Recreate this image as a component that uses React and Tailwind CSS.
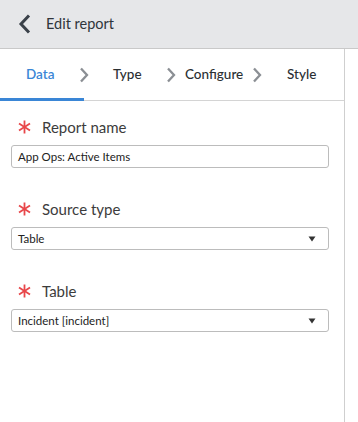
function Asterisk() {
  return (
    <svg width="13" height="14" viewBox="0 0 13 14" className="shrink-0">
      <g stroke="#e8474a" strokeWidth="1.8" strokeLinecap="butt">
        <line x1="6.5" y1="0.5" x2="6.5" y2="13.5" />
        <line x1="1" y1="3.5" x2="12" y2="10.5" />
        <line x1="1" y1="10.5" x2="12" y2="3.5" />
      </g>
    </svg>
  );
}

function Caret() {
  return (
    <svg width="8" height="6" viewBox="0 0 8 6" className="shrink-0">
      <path d="M0.5 0.5 L7.5 0.5 L4 5.5 Z" fill="#333" />
    </svg>
  );
}

function StepChevron() {
  return (
    <svg width="10" height="16" viewBox="0 0 10 16" className="shrink-0">
      <path d="M2 1.5 L8 8 L2 14.5" fill="none" stroke="#8b8f94" strokeWidth="2.3" />
    </svg>
  );
}

function Field({ label, value, select }) {
  return (
    <div className="flex flex-col">
      <div className="flex items-center h-5 pl-[18px]">
        <Asterisk />
        <span className="ml-[11px] text-[15px] text-[#3c3c3c] leading-5">{label}</span>
      </div>
      <div className="mt-2 ml-[11px] w-[318px] h-[23px] border border-[#bcbcbc] rounded-[3px] flex items-center pl-[6px] pr-[12px]">
        <span className="flex-1 text-[11.5px] text-[#222]">{value}</span>
        {select && <Caret />}
      </div>
    </div>
  );
}

export default function App() {
  return (
    <div className="w-[358px] h-[422px] bg-white flex flex-col overflow-hidden" style={{ fontFamily: 'Lato, "Open Sans", sans-serif' }}>
      <div className="h-[49px] shrink-0 bg-[#e6e7e9] border-b border-[#c9c9c9] flex items-center">
        <svg width="14" height="20" viewBox="0 0 14 20" className="ml-[18px] shrink-0">
          <path d="M11 1.5 L3 10 L11 18.5" fill="none" stroke="#3a4149" strokeWidth="3" />
        </svg>
        <span className="ml-[14px] text-[14.5px] text-[#2f353b]">Edit report</span>
      </div>
      <div className="flex flex-1">
        <div className="w-[345px] border-r border-[#cfcfcf] flex flex-col">
          <div className="h-[52px] shrink-0 border-b border-[#d4d4d4] flex items-center relative pl-[26px] text-[13.5px] font-medium">
            <span className="w-[53px] text-[#3a86d6] font-semibold">Data</span>
            <StepChevron />
            <span className="ml-[24px] w-[53px] text-[#2b2f33]">Type</span>
            <StepChevron />
            <span className="ml-[9px] w-[67px] text-[#2b2f33]">Configure</span>
            <StepChevron />
            <span className="ml-[25px] text-[#2b2f33]">Style</span>
            <div className="absolute left-0 bottom-[-1px] w-[84px] h-[3px] bg-[#3a86d6]" />
          </div>
          <div className="flex flex-col gap-[31px] pt-[16px]">
            <Field label="Report name" value="App Ops: Active Items" />
            <Field label="Source type" value="Table" select />
            <Field label="Table" value="Incident [incident]" select />
          </div>
        </div>
      </div>
    </div>
  );
}
